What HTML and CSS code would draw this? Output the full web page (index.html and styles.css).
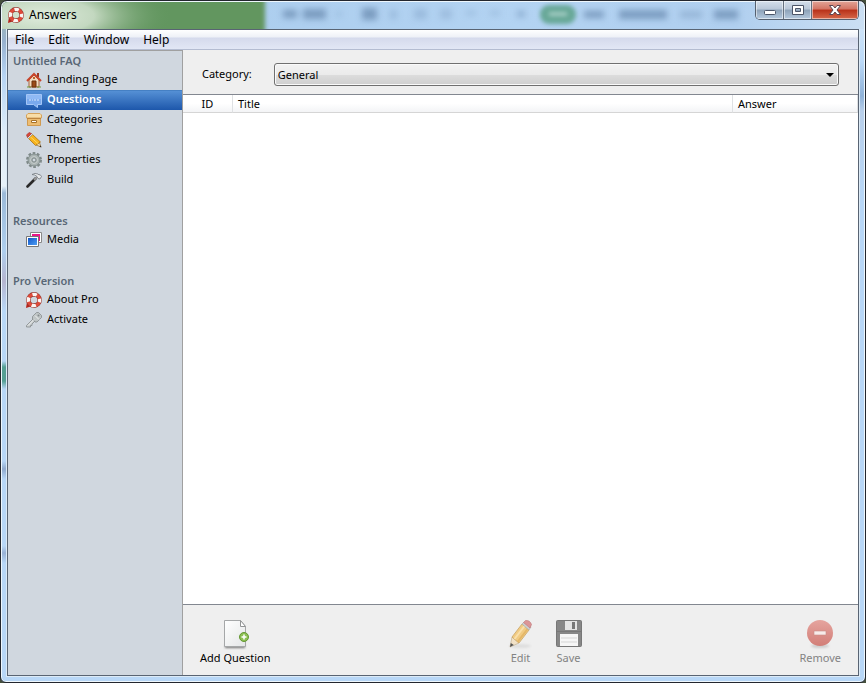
FILE: index.html
```html
<!DOCTYPE html>
<html lang="en">
<head>
  <meta charset="UTF-8" />
  <meta name="viewport" content="width=device-width, initial-scale=1.0"/>
  <title>Answers</title>
  <link rel="stylesheet" href="styles.css">
</head>
<body>

<!-- shared icon shapes -->
<svg class="sprite" aria-hidden="true">
  <defs>
    <linearGradient id="pageFill" x1="0" y1="0" x2="1" y2="1">
      <stop offset="0" stop-color="#fff"/><stop offset="1" stop-color="#e4e6e7"/>
    </linearGradient>
    <linearGradient id="redFill" x1="0" y1="0" x2="0" y2="1">
      <stop offset="0" stop-color="#e5a49e"/><stop offset="1" stop-color="#d27e77"/>
    </linearGradient>
    <linearGradient id="blueFill" x1="0" y1="0" x2="1" y2="1">
      <stop offset="0" stop-color="#1257c9"/><stop offset="1" stop-color="#4d9cf2"/>
    </linearGradient>
    <radialGradient id="glow">
      <stop offset="0" stop-color="#dfebdc"/><stop offset=".4" stop-color="#c3d8c0"/><stop offset="1" stop-color="#62965f" stop-opacity="0"/>
    </radialGradient>
    <filter id="soft" x="-50%" y="-50%" width="200%" height="200%"><feGaussianBlur stdDeviation="1"/></filter>
    <symbol id="lifebuoy" viewBox="0 0 16 16">
      <path d="M0 16l1-6 5 4z" fill="#b5231a"/>
      <circle cx="8" cy="8" r="5.6" fill="none" stroke="#8d3a33" stroke-width="4.600"/>
      <circle cx="8" cy="8" r="5.6" fill="none" stroke="#e04a3a" stroke-width="3.400"/>
      <circle cx="8" cy="8" r="5.6" fill="none" stroke="#fbf5f3" stroke-width="3.400" stroke-dasharray="4.4 4.396" stroke-dashoffset="2.2"/>
    </symbol>
  </defs>
</svg>

<div class="window">
  <header class="titlebar">
    <svg class="glass" aria-hidden="true">
      <g class="glass-blur">
        <rect x="-10" y="-10" width="273" height="50" fill="#62965f"/>
      </g>
      <ellipse cx="40" cy="14" rx="130" ry="44" fill="url(#glow)"/>
      <g class="glass-marks">
        <rect x="281" y="8" width="14" height="8"/>
        <rect x="301" y="7" width="23" height="10"/>
        <rect x="334" y="10" width="6" height="4" opacity=".4"/>
        <rect x="360" y="6" width="15" height="12"/>
        <rect x="388" y="8" width="7" height="9" opacity=".4"/>
        <rect x="412" y="7" width="13" height="10" opacity=".4"/>
        <rect x="438" y="7" width="12" height="10" opacity=".35"/>
        <rect x="464" y="9" width="10" height="4" opacity=".4"/>
        <rect x="488" y="9" width="10" height="4" opacity=".4"/>
        <rect x="515" y="9" width="8" height="6" opacity=".7"/>
        <rect x="582" y="9" width="20" height="7"/>
        <rect x="617" y="8" width="48" height="9"/>
        <rect x="678" y="9" width="22" height="7" opacity=".5"/>
        <rect x="712" y="8" width="24" height="9"/>
      </g>
      <g class="glass-badge">
        <rect x="538" y="3" width="36" height="19" rx="9" fill="#68a898"/>
        <rect x="547" y="10" width="18" height="4" fill="#a5cdc4"/>
      </g>
    </svg>
    <svg class="icon"><use href="#lifebuoy"/></svg>
    <h1>Answers</h1>
    <div class="controls">
      <button type="button" aria-label="Minimize">
        <svg width="14" height="12" viewBox="0 0 14 12"><rect x="1.500" y="6.500" width="11" height="4" rx="1" fill="#fff" stroke="#4c5568"/></svg>
      </button>
      <button type="button" aria-label="Maximize">
        <svg width="14" height="12" viewBox="0 0 14 12"><path d="M1.500 1.500h11v9h-11zM4.500 4.500v3h5v-3z" fill="#fff" fill-rule="evenodd" stroke="#4c5568"/></svg>
      </button>
      <button type="button" class="close" aria-label="Close">
        <svg width="14" height="12" viewBox="0 0 14 12"><path d="M1.500 1.500h3.500l2 2.500 2-2.500h3.500l-3.500 4.500 3.500 4.500h-3.500l-2-2.500-2 2.500h-3.500l3.500-4.500z" fill="#fff" stroke="#5b4550"/></svg>
      </button>
    </div>
  </header>

  <div class="client">
    <nav class="menubar" aria-label="Menu">
      <button type="button">File</button>
      <button type="button">Edit</button>
      <button type="button">Window</button>
      <button type="button">Help</button>
    </nav>

    <div class="content">
      <nav class="sidebar" aria-label="Sections">
        <h2>Untitled FAQ</h2>
        <ul>
          <li><a href="#landing">
            <svg class="icon" viewBox="0 0 16 16"><path d="M11 1h2v4h-2z" fill="#9c3a24"/><path d="M3 8l5-5 5 5v7H3z" fill="#f2dcc0" stroke="#a5623c"/><path d="M1 9l7-7 7 7" fill="none" stroke="#c8452c" stroke-width="2"/><path d="M6 9h4v6H6z" fill="#9a4a17" stroke="#6d320d"/><path d="M7 5h2v2H7z" fill="#b9642d"/><path d="M1 15h4M11 15h4" stroke="#6f9a3d"/></svg>
            Landing Page</a></li>
          <li><a href="#questions" class="active" aria-current="page">
            <svg class="icon" viewBox="0 0 16 16"><path d="M.5 2.500h15v10h-4v3l-4-3h-7z" fill="#79a9ed" stroke="#a4c6f7"/><path d="M1 3h14v4H1z" fill="#8fb9f4"/><path d="M3 8h2M6 8h1M8 8h2M11 8h2" stroke="#d8e7fc"/></svg>
            Questions</a></li>
          <li><a href="#categories">
            <svg class="icon" viewBox="0 0 16 16"><path d="M1.500 5.500h13v8h-13z" fill="#edbd72" stroke="#d09a50"/><path d="M2 1.500h12l1.500 1.500v3H.5V3z" fill="#f8dda8" stroke="#d5a35c"/><path d="M1 6.500h14" stroke="#bd8540"/><path d="M5.500 8.500h5v2h-5z" fill="#fff" stroke="#a77228"/></svg>
            Categories</a></li>
          <li><a href="#theme">
            <svg class="icon" viewBox="0 0 16 16"><path d="M15 15l-5-2 3-4z" fill="#f3d9a4" stroke="#80571b" stroke-width=".6"/><path d="M9.500 13.500L2.500 6.500l4-4 8 7.500z" fill="#f6b21d" stroke="#a36a0c" stroke-width=".7"/><path d="M4.500 5l7.500 6.500" stroke="#ffd95c"/><path d="M2.500 6.500l4-4-1-1-4 4z" fill="#dde0e3" stroke="#888" stroke-width=".5"/><path d="M1.500 5.500l4-4L3 .5.5 3z" fill="#d9483a" stroke="#a12d24" stroke-width=".6"/><path d="M15.500 15.500l-2-1 1-1z" fill="#222"/></svg>
            Theme</a></li>
          <li><a href="#properties">
            <svg class="icon" viewBox="0 0 16 16"><circle cx="8" cy="8" r="6.500" fill="none" stroke="#7e8988" stroke-width="3" stroke-dasharray="2.500 1.584"/><circle cx="8" cy="8" r="6" fill="#a8b2b1" stroke="#859190"/><circle cx="8" cy="8" r="3.500" fill="none" stroke="#c5cccb"/><circle cx="8" cy="8" r="2" fill="#d1d8df" stroke="#7e8988"/></svg>
            Properties</a></li>
          <li><a href="#build">
            <svg class="icon" viewBox="0 0 16 16"><path d="M1.500 14.500l8-8" stroke="#292929" stroke-width="2.600" stroke-linecap="round"/><path d="M8 8l3-3" stroke="#999" stroke-width="2"/><path d="M6 2.500Q9 .5 12 2l1 1 1-.5 1.500 2L14 7l-2-.5-1-2Q9 2.500 6 2.500z" fill="#e6e9eb" stroke="#737a80" stroke-width=".8"/></svg>
            Build</a></li>
        </ul>

        <h2>Resources</h2>
        <ul>
          <li><a href="#media">
            <svg class="icon" viewBox="0 0 16 16"><path d="M4.500.5h11v10h-11z" fill="#fff" stroke="#888"/><path d="M6 2h8v7H6z" fill="#ec1689"/><path d="M.5 4.500h12v10H.5z" fill="#fff" stroke="#777"/><path d="M2 6h9v7H2z" fill="url(#blueFill)"/></svg>
            Media</a></li>
        </ul>

        <h2>Pro Version</h2>
        <ul>
          <li><a href="#about"><svg class="icon"><use href="#lifebuoy"/></svg> About Pro</a></li>
          <li><a href="#activate">
            <svg class="icon" viewBox="0 0 16 16"><path d="M.5 13.500L8 6l2 2-4 4v1.500H4.500V15H.5z" fill="#c7cccd" stroke="#858b8d" stroke-width=".8"/><path d="M6.500 4.500L10.500.5h2l3 3v2L11 10H9L6.500 7z" fill="#bfc5c6" stroke="#858b8d" stroke-width=".8"/><path d="M2 13.500L8 7.500M9 3.500l4 4" stroke="#eef0f0"/><circle cx="12.500" cy="3.500" r="1" fill="#858b8d"/></svg>
            Activate</a></li>
        </ul>
      </nav>

      <main class="main">
        <form class="filter">
          <label for="category">Category:</label>
          <div class="select-wrap">
            <select id="category" name="category">
              <option>General</option>
            </select>
          </div>
        </form>

        <div class="list">
          <table>
            <thead>
              <tr>
                <th class="col-id" scope="col">ID</th>
                <th scope="col">Title</th>
                <th class="col-answer" scope="col">Answer</th>
              </tr>
            </thead>
            <tbody></tbody>
          </table>
        </div>

        <footer class="toolbar">
          <button type="button" class="add">
            <svg width="32" height="32" viewBox="0 0 32 32">
              <path d="M6 27h20v3H6z" fill="#777" filter="url(#soft)"/>
              <path d="M5.500 2.500h16l5 6v20h-21z" fill="url(#pageFill)" stroke="#a5a7a8"/>
              <path d="M21.500 2.500v6h5z" fill="#fff" stroke="#929495"/>
              <circle cx="25" cy="19" r="4.500" fill="#8cbf52" stroke="#649733"/>
              <path d="M25 16.500v5M22.500 19h5" stroke="#fff" stroke-width="1.500"/>
            </svg>
            Add Question
          </button>
          <div class="group">
            <button type="button" disabled>
              <svg width="32" height="32" viewBox="0 0 32 32">
                <ellipse cx="15" cy="28" rx="11" ry="2" fill="#dedede" filter="url(#soft)"/>
                <path d="M5 29l2-10 7 6z" fill="#f1e1c7" stroke="#bba888" stroke-width=".6"/>
                <path d="M7 19L17 6l7 6-10 13z" fill="#f1cb83" stroke="#c9a566" stroke-width=".8"/>
                <path d="M9.500 21L19.500 8" stroke="#f9dfaa" stroke-width="2"/>
                <path d="M12.500 24L22.500 11" stroke="#e4b768" stroke-width="2"/>
                <path d="M17 6l2-2 7 5-2 3z" fill="#cdd0d1" stroke="#aaa" stroke-width=".6"/>
                <path d="M18.500 4.500l2-2Q25 2 26.500 6.500L25 10z" fill="#dc9597" stroke="#be7779" stroke-width=".6"/>
                <path d="M5 29l.8-4 3 2z" fill="#555"/>
              </svg>
              Edit
            </button>
            <button type="button" disabled>
              <svg width="32" height="32" viewBox="0 0 32 32">
                <path d="M3.500 3.500q0-1 1-1h23q1 0 1 1v24q0 1-1 1h-23q-1 0-1-1z" fill="#878787" stroke="#777"/>
                <path d="M12 3h12v9H12z" fill="#e4e4e4"/><path d="M19 4h3v7h-3z" fill="#777"/>
                <path d="M7 16h18v12H7z" fill="#f6f6f6"/><path d="M8 20h16M8 24h16" stroke="#d5d5d5"/>
                <path d="M4 13.500h24" stroke="#777"/>
              </svg>
              Save
            </button>
          </div>
          <button type="button" class="remove" disabled>
            <svg width="32" height="32" viewBox="0 0 32 32">
              <ellipse cx="16" cy="28" rx="9" ry="2" fill="#ccc" filter="url(#soft)"/>
              <circle cx="16" cy="15" r="13" fill="url(#redFill)"/>
              <path d="M10 13h12v4H10z" fill="#f7ecea" stroke="#c98d88" stroke-width=".6"/>
            </svg>
            Remove
          </button>
        </footer>
      </main>
    </div>
  </div>
</div>

</body>
</html>
```
FILE: styles.css
```css
* {
  box-sizing: border-box;
}

body {
  margin: 0;
  height: 100vh;
  background: #45503c;
  font-family: "Noto Sans", "Open Sans", sans-serif;
  font-size: 11px;
  color: #000;
}

button, select {
  font: inherit;
  color: inherit;
}

.sprite {
  position: absolute;
  width: 0;
  height: 0;
}

.icon {
  width: 16px;
  height: 16px;
  flex: none;
}

/* window frame */
.window {
  display: flex;
  flex-direction: column;
  height: 100vh;
  padding: 0 5px 5px;
  border: 1px solid #23262e;
  border-radius: 7px 7px 6px 6px;
  box-shadow: inset 0 0 0 1px #eef7fd;
  background:
    linear-gradient(#9fb9a0 0, #97b1cf 40px, #b7d4f3 75px, #dcebf8 130px, #e6f0f8 185px, #9bb9d8 192px, #afcfee 250px, #b5b5d0 280px, #b9d8f7 310px, #b8d7f7 360px, #559f94 366px, #559f94 380px, #b8d7f7 388px, #b8d7f7 460px, #90aace 468px, #b8d7f7 478px, #b8d7f7 545px, #98b1d5 552px, #b8d7f7 562px) left / 8px 100% no-repeat,
    linear-gradient(#dcebf8 0, #bcdaf8 60px, #8fb2d8 95px, #b8cfea 110px, #b8d7f7 200px);
}

.titlebar {
  position: relative;
  display: flex;
  align-items: center;
  height: 28px;
  margin: 0 -5px;
  padding: 0 6px 0 7px;
  flex: none;
}

.titlebar h1 {
  margin: 0 0 0 5px;
  font-size: 12px;
  font-weight: normal;
  line-height: 16px;
  position: relative;
}

.titlebar .icon {
  position: relative;
}

.glass {
  position: absolute;
  top: 1px;
  left: 1px;
  width: calc(100% - 2px);
  height: 27px;
  border-radius: 6px 6px 0 0;
  background: linear-gradient(to right, #a7caeb, #b3d3f2 60%, #b0cfef 85%, #cbdff3);
}

.glass-blur {
  filter: blur(2px);
}

.glass-marks {
  filter: blur(3px);
  fill: #7b9cc0;
}

.glass-badge {
  filter: blur(2px);
}

.controls {
  position: relative;
  display: flex;
  align-self: flex-start;
  margin-left: auto;
  border: 1px solid #55606f;
  border-top: 0;
  border-radius: 0 0 5px 5px;
  overflow: hidden;
}

.controls button {
  display: flex;
  align-items: center;
  justify-content: center;
  width: 28px;
  height: 18px;
  padding: 0;
  border: 0;
  border-right: 1px solid #66717f;
  background: linear-gradient(#d5dfeb, #b9c7d8 45%, #8da2b8 50%, #b5c9de);
  box-shadow: inset 0 0 0 1px rgba(255, 255, 255, 0.5);
}

.controls .close {
  width: 46px;
  border-right: 0;
  background: linear-gradient(#e2a598, #d37464 45%, #b83119 50%, #d6684a);
}

.client {
  display: flex;
  flex-direction: column;
  flex: 1;
  min-height: 0;
  margin: 0 1px 1px;
  border: 1px solid #596473;
  background: #efefef;
  outline: 1px solid #dceaf6;
}

.menubar {
  display: flex;
  height: 20px;
  flex: none;
  border-bottom: 1px solid #b4bcd1;
  background: linear-gradient(#fff, #eef1f7 7px, #d5daec 8px, #e2e7f5);
}

.menubar button {
  padding: 0 7px;
  border: 0;
  background: none;
  font-size: 12px;
  line-height: 19px;
}

.content {
  display: flex;
  flex: 1;
  min-height: 0;
}

/* left navigation */
.sidebar {
  width: 175px;
  flex: none;
  border-top: 1px solid #a0a0a0;
  border-right: 1px solid #a0a0a0;
  background: #d0d7df;
}

.sidebar h2 {
  margin: 0;
  padding: 0 5px;
  font-size: 11px;
  font-weight: 600;
  line-height: 19px;
  color: #596776;
}

.sidebar ul {
  margin: 0 0 21px;
  padding: 0;
  list-style: none;
}

.sidebar a {
  display: flex;
  gap: 5px;
  height: 20px;
  padding-left: 18px;
  color: #000;
  line-height: 18px;
  text-decoration: none;
}

.sidebar .icon {
  margin-top: 2px;
}

.sidebar .active {
  background: linear-gradient(#4580c4 1px, #5590d5 1px, #1d57ab);
  color: #fff;
  font-weight: 600;
}

/* right side */
.main {
  display: flex;
  flex-direction: column;
  flex: 1;
  min-width: 0;
}

.filter {
  display: flex;
  align-items: center;
  gap: 22px;
  height: 44px;
  padding: 4px 19px 0;
  flex: none;
}

.filter label {
  padding-bottom: 2px;
}

.select-wrap {
  position: relative;
  flex: 1;
}

.select-wrap::after {
  content: "";
  position: absolute;
  top: 10px;
  right: 5px;
  border: 4px solid transparent;
  border-top-color: #000;
  border-bottom: 0;
  pointer-events: none;
}

.select-wrap select {
  display: block;
  width: 100%;
  height: 23px;
  padding: 0 3px;
  border: 1px solid #707070;
  border-radius: 3px;
  box-shadow: inset 0 0 0 1px #fafafa;
  background: linear-gradient(#f2f2f2, #ebebeb 50%, #dddddd 51%, #cfcfcf);
  appearance: none;
}

.list {
  flex: 1;
  min-height: 0;
  border-top: 1px solid #828790;
  border-bottom: 1px solid #828790;
  background: #fff;
}

.list table {
  width: 100%;
  border-collapse: separate;
  border-spacing: 0;
  table-layout: fixed;
}

.list th {
  height: 18px;
  padding: 0 5px;
  border-right: 1px solid #dfe1e3;
  border-bottom: 1px solid #d5d5d5;
  background: linear-gradient(#fff 50%, #f3f4f6);
  font-weight: normal;
  line-height: 17px;
  text-align: left;
}

.list .col-id {
  width: 50px;
  text-align: center;
}

.list .col-answer {
  width: 125px;
}

.toolbar {
  display: grid;
  grid-template-columns: 1fr 48px 1fr;
  height: 70px;
  padding: 13px 13px 0;
  flex: none;
}

.toolbar button {
  display: flex;
  flex-direction: column;
  align-items: center;
  min-width: 48px;
  padding: 0 4px;
  border: 0;
  background: none;
  line-height: 16px;
}

.toolbar button:disabled {
  color: #838383;
}

/* edit stays centred, save hangs to its right */
.toolbar .group {
  display: flex;
}

.toolbar .add {
  justify-self: start;
}

.toolbar .remove {
  justify-self: end;
}
```
